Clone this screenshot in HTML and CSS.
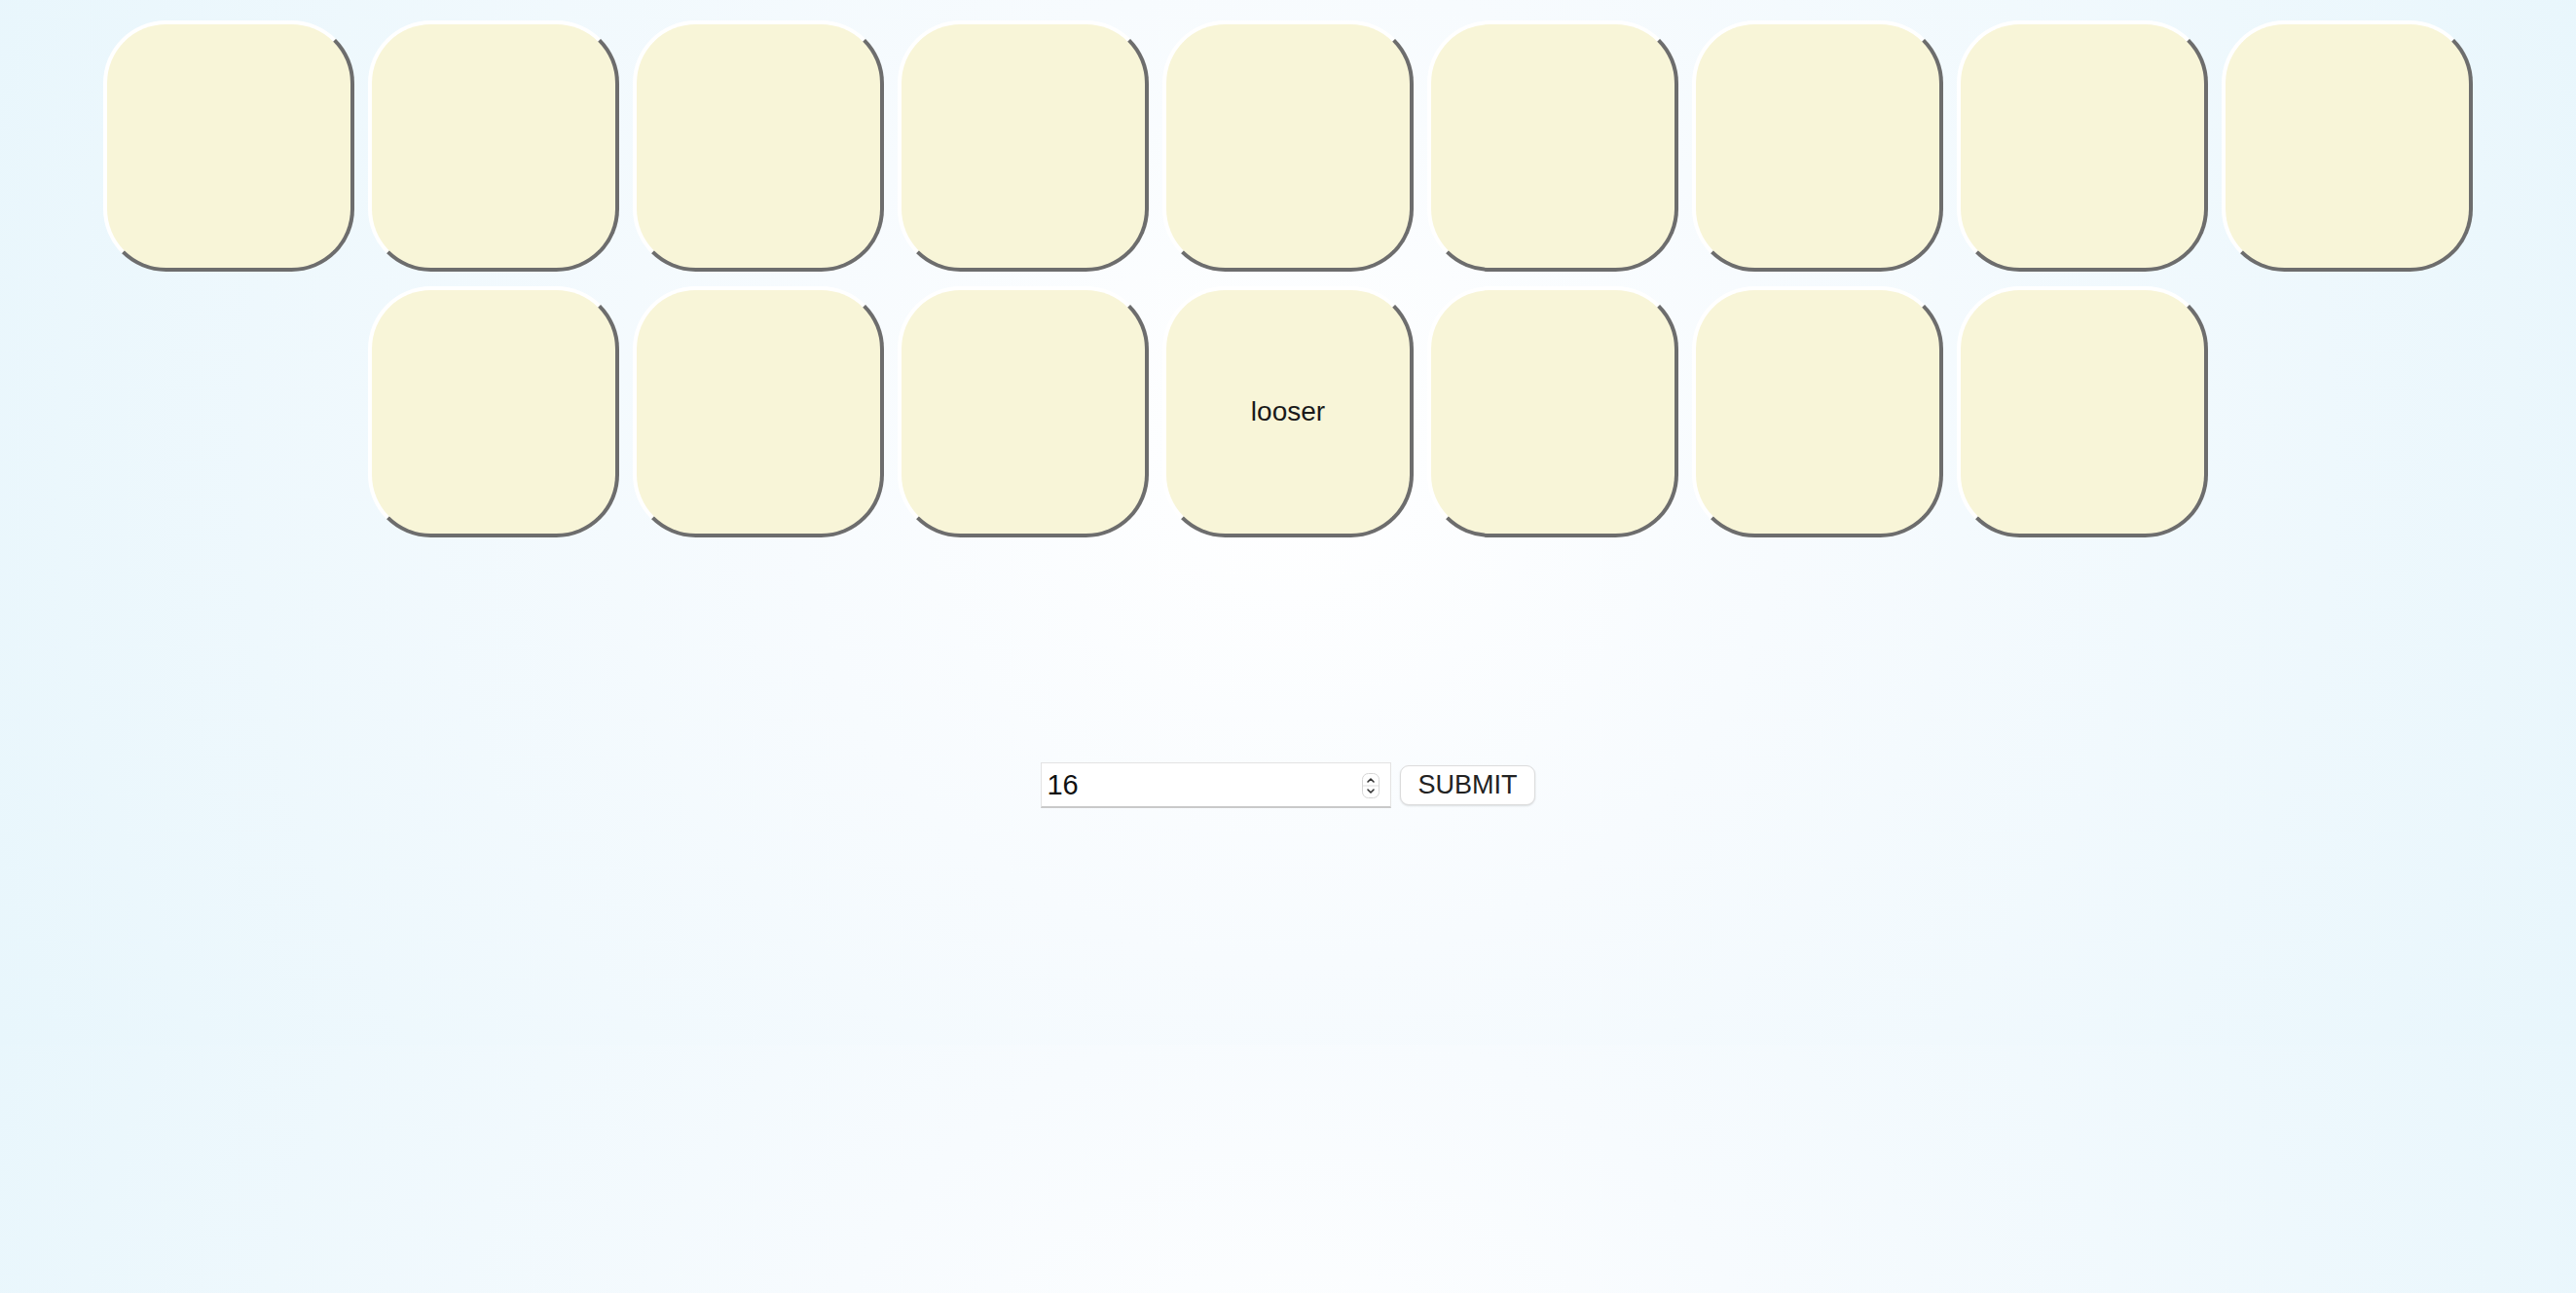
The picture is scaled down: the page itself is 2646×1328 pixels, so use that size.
FILE: index.html
```html
<!DOCTYPE html>
<html lang="en">
<head>
    <meta charset="UTF-8">
    <meta name="viewport" content="width=device-width, initial-scale=1.0">
    <title>Cards</title>
    <link rel="stylesheet" href="styles.css">
</head>
<body>
    <div class="board" id="board">
        <div class="card"></div>
        <div class="card"></div>
        <div class="card"></div>
        <div class="card"></div>
        <div class="card"></div>
        <div class="card"></div>
        <div class="card"></div>
        <div class="card"></div>
        <div class="card"></div>
        <div class="card"></div>
        <div class="card"></div>
        <div class="card"></div>
        <div class="card">looser</div>
        <div class="card"></div>
        <div class="card"></div>
        <div class="card"></div>
    </div>

    <form class="controls" id="countForm">
        <span class="field">
            <input type="number" id="count" name="count" value="16" min="1">
            <span class="spinner">
                <svg width="18" height="26" viewBox="0 0 18 26">
                    <rect x="0.5" y="0.5" width="17" height="25" rx="6" fill="#fff" stroke="#d6d6d6"/>
                    <line x1="1" y1="13" x2="17" y2="13" stroke="#dcdcdc"/>
                    <polyline points="6,9 9,6 12,9" fill="none" stroke="#333" stroke-width="1.6" stroke-linecap="round" stroke-linejoin="round"/>
                    <polyline points="6,17 9,20 12,17" fill="none" stroke="#333" stroke-width="1.6" stroke-linecap="round" stroke-linejoin="round"/>
                </svg>
            </span>
        </span>
        <button type="submit">SUBMIT</button>
    </form>
</body>
</html>
```

FILE: styles.css
```css
html {
    background: radial-gradient(circle at 50% 45%, #ffffff 0%, #f7fbfe 35%, #e8f6fc 100%);
    background-size: 100% 1073px;
    background-repeat: repeat-y;
}
body {
    margin: 8px;
    font-family: "Liberation Sans", Arial, sans-serif;
    color: #1a1a1a;
}
.board {
    display: flex;
    flex-wrap: wrap;
    justify-content: center;
    gap: 15px 14px;
    padding-top: 13px;
}
.card {
    width: 250px;
    height: 250px;
    border: 4px solid;
    border-color: #ffffff #6d6d6d #6d6d6d #ffffff;
    border-radius: 25%;
    background-color: #f8f5d8;
    display: flex;
    align-items: center;
    justify-content: center;
    font-size: 28px;
}
.controls {
    display: flex;
    justify-content: center;
    align-items: center;
    gap: 9px;
    margin-top: 231px;
}
.field {
    position: relative;
    display: inline-block;
}
.field input {
    box-sizing: border-box;
    width: 360px;
    height: 47px;
    padding: 0 40px 0 5px;
    font-family: "Liberation Sans", Arial, sans-serif;
    font-size: 29px;
    color: #111;
    background: #fff;
    border: 1px solid #e3e3e3;
    border-bottom: 2px solid #c9c9c9;
    border-radius: 0;
    outline: none;
    -moz-appearance: textfield;
}
.field input::-webkit-inner-spin-button,
.field input::-webkit-outer-spin-button {
    -webkit-appearance: none;
    margin: 0;
}
.spinner {
    position: absolute;
    right: 12px;
    top: 11px;
    width: 18px;
    height: 26px;
    pointer-events: none;
}
.spinner svg {
    display: block;
}
button {
    height: 41px;
    padding: 0 17px;
    font-family: "Liberation Sans", Arial, sans-serif;
    font-size: 27px;
    color: #222;
    background: #fff;
    border: 1px solid #dcdcdc;
    border-radius: 9px;
    box-shadow: 0 1px 2px rgba(0,0,0,0.12);
    cursor: pointer;
}
```
